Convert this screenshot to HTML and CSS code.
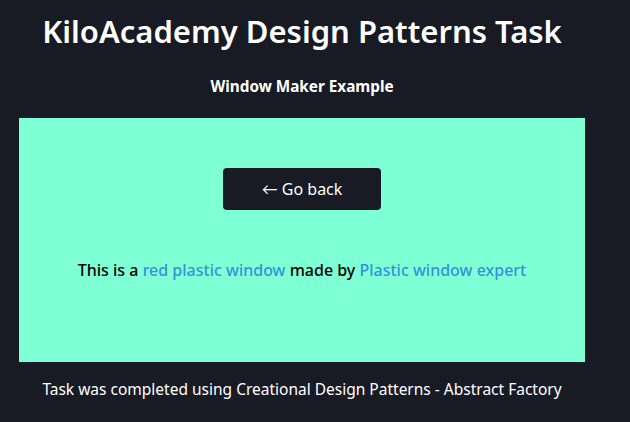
FILE: index.html
```html
<!DOCTYPE html>
<html>
<head>
<meta charset="utf-8">
<link rel="stylesheet" href="styles.css">
</head>
<body>
<div class="page">
  <h1 class="title">KiloAcademy Design Patterns Task</h1>
  <h2 class="subtitle">Window Maker Example</h2>
  <main class="panel">
    <button class="back">&larr; Go back</button>
    <p class="desc">This is a <span class="link">red plastic window</span> made by <span class="link">Plastic window expert</span></p>
  </main>
  <footer class="footer">Task was completed using Creational Design Patterns - Abstract Factory</footer>
</div>
</body>
</html>
```
FILE: styles.css
```css
html, body {
  margin: 0;
  padding: 0;
  background: #181b24;
  font-family: "Noto Sans", "Lato", sans-serif;
  color: #fff;
}
.page {
  width: 566px;
  margin-left: 19px;
  display: flex;
  flex-direction: column;
  align-items: center;
}
.title {
  margin: 10px 0 0;
  font-size: 31px;
  font-weight: 600;
  line-height: 42px;
}
.subtitle {
  margin: 24px 0 0;
  font-size: 15.3px;
  font-weight: 700;
  line-height: 20px;
}
.panel {
  margin-top: 22px;
  align-self: stretch;
  height: 244px;
  background: #7fffd4;
  display: flex;
  flex-direction: column;
  align-items: center;
}
.back {
  margin-top: 50px;
  width: 158px;
  height: 42px;
  border: none;
  border-radius: 4px;
  background: #181b24;
  color: #fff;
  font-family: inherit;
  font-size: 16px;
}
.desc {
  margin: 50px 0 0;
  color: #000;
  font-size: 16px;
  line-height: 20px;
  font-weight: 500;
}
.link {
  color: #3790dd;
}
.footer {
  margin-top: 17px;
  font-size: 15.5px;
  line-height: 20px;
}
```
